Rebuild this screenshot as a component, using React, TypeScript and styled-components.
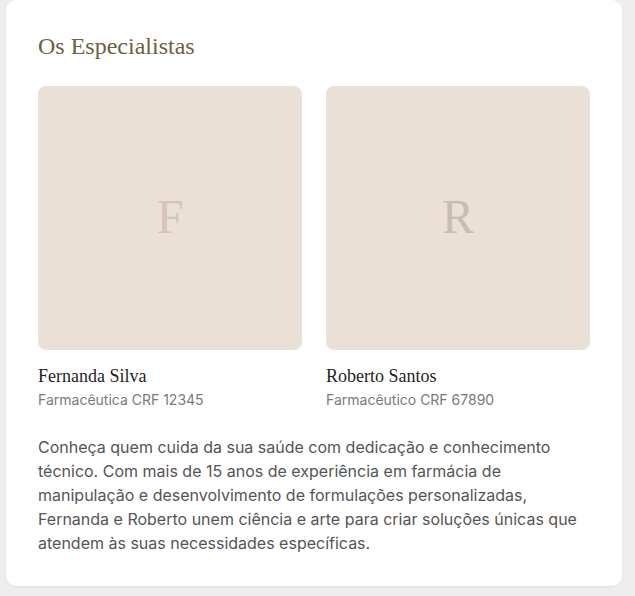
import React from "react";
import styled, { createGlobalStyle } from "styled-components";

const Global = createGlobalStyle`
  html, body { margin: 0; padding: 0; background: #eeeeee; }
  body { padding: 0 13px 11px 6px; }
  * { box-sizing: border-box; }
`;

const Card = styled.section`
  background: #ffffff;
  border-radius: 10px;
  box-shadow: 0 1px 3px rgba(0, 0, 0, 0.06);
  padding: 32px 32px 31px;
  width: 616px;
`;

const Title = styled.h2`
  margin: 0 0 25px;
  font-family: "Liberation Serif", "Times New Roman", serif;
  font-weight: 400;
  font-size: 24px;
  line-height: 1.2;
  color: #6b6143;
`;

const Grid = styled.div`
  display: grid;
  grid-template-columns: 264px 264px;
  gap: 24px;
`;

const Person = styled.div`
  display: flex;
  flex-direction: column;
`;

const Photo = styled.div<{ $tone: string }>`
  width: 264px;
  height: 264px;
  border-radius: 8px;
  background: #ebe0d6;
  display: flex;
  align-items: center;
  justify-content: center;
  font-family: "Liberation Serif", "Times New Roman", serif;
  font-size: 48px;
  color: ${(p) => p.$tone};
  padding-bottom: 2px;
`;

const Name = styled.h3`
  margin: 16px 0 0;
  font-family: "Liberation Serif", "Times New Roman", serif;
  font-weight: 400;
  font-size: 18px;
  line-height: 1.2;
  color: #1f1f1f;
`;

const Role = styled.p`
  margin: 2px 0 0;
  font-family: Inter, "Liberation Sans", sans-serif;
  font-size: 14px;
  line-height: 1.5;
  color: #7a7a7a;
`;

const About = styled.p`
  margin: 25px 0 0;
  font-family: Inter, "Liberation Sans", sans-serif;
  font-size: 16px;
  line-height: 24px;
  color: #555555;
`;

const people = [
  { initial: "F", name: "Fernanda Silva", role: "Farmacêutica CRF 12345", tone: "#d6c3ba" },
  { initial: "R", name: "Roberto Santos", role: "Farmacêutico CRF 67890", tone: "#c9bead" },
];

export default function App() {
  return (
    <>
      <Global />
      <Card>
        <Title>Os Especialistas</Title>
        <Grid>
          {people.map((p) => (
            <Person key={p.name}>
              <Photo $tone={p.tone}>{p.initial}</Photo>
              <Name>{p.name}</Name>
              <Role>{p.role}</Role>
            </Person>
          ))}
        </Grid>
        <About>
          Conheça quem cuida da sua saúde com dedicação e conhecimento técnico. Com mais de 15
          anos de experiência em farmácia de manipulação e desenvolvimento de formulações
          personalizadas, Fernanda e Roberto unem ciência e arte para criar soluções únicas que
          atendem às suas necessidades específicas.
        </About>
      </Card>
    </>
  );
}
